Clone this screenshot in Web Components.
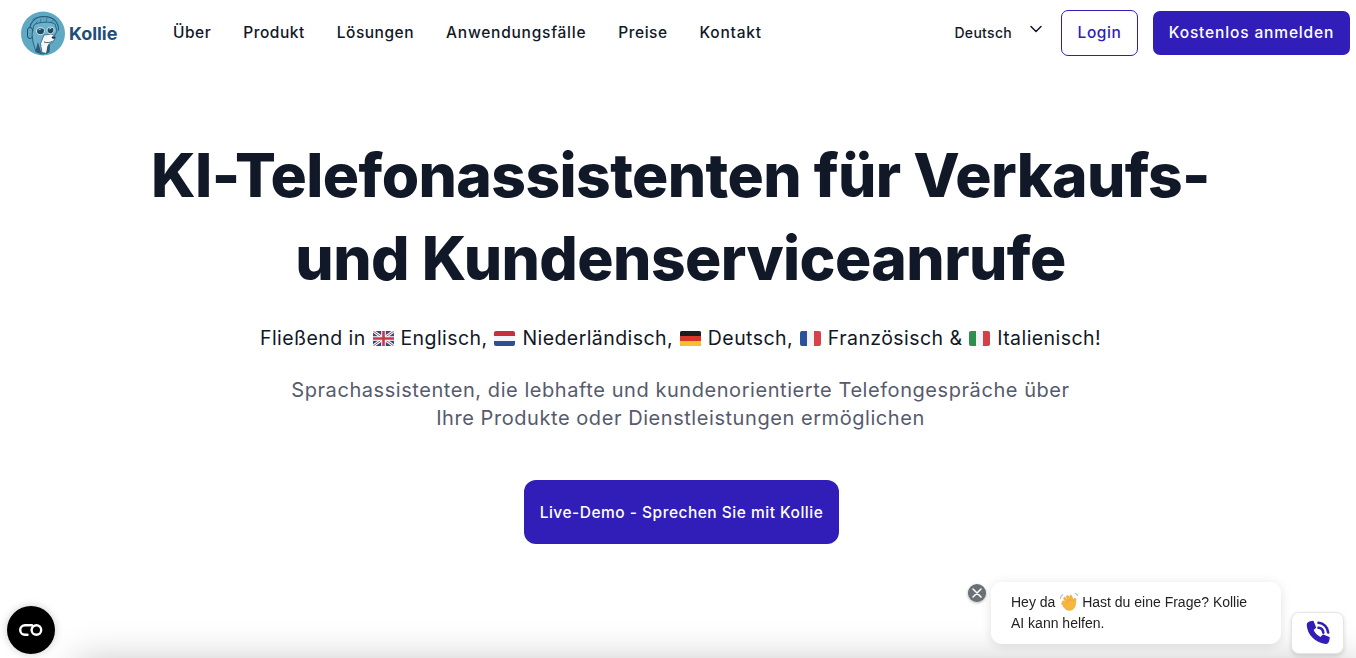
<!DOCTYPE html>
<html lang="de">
<head>
<meta charset="utf-8">
<title>Kollie</title>
<style>
  html, body { margin: 0; height: 100%; overflow: hidden; background: #fff; }
  body { font-family: Inter, "Liberation Sans", sans-serif; color: #111827; }
</style>
</head>
<body>
<kollie-nav></kollie-nav>
<kollie-hero>
  <span slot="title">KI-Telefonassistenten für Verkaufs-<br>und Kundenserviceanrufe</span>
  <span slot="lead">Fließend in <kollie-flag code="gb"></kollie-flag> Englisch, <kollie-flag code="nl"></kollie-flag> Niederländisch, <kollie-flag code="de"></kollie-flag> Deutsch, <kollie-flag code="fr"></kollie-flag> Französisch &amp; <kollie-flag code="it"></kollie-flag> Italienisch!</span>
  <span slot="text">Sprachassistenten, die lebhafte und kundenorientierte Telefongespräche über<br>Ihre Produkte oder Dienstleistungen ermöglichen</span>
  <span slot="cta">Live-Demo - Sprechen Sie mit Kollie</span>
</kollie-hero>
<kollie-next></kollie-next>
<kollie-a11y></kollie-a11y>
<kollie-chat></kollie-chat>

<script>
class KollieNav extends HTMLElement {
  constructor() {
    super();
    this.attachShadow({ mode: "open" });
  }
  connectedCallback() {
    this.shadowRoot.innerHTML = `
    <style>
      :host { display: block; font-family: Inter, sans-serif; }
      .bar { display: flex; align-items: center; height: 65px; padding: 0 6px 0 20px; }
      .brand { display: flex; align-items: center; gap: 2px; width: 153px; text-decoration: none; margin-top: 1px; }
      .brand span { font-size: 18px; font-weight: 700; color: #1f4e79; letter-spacing: -.05px; }
      ul { display: flex; gap: 32px; list-style: none; margin: 0; padding: 0 0 2px; flex: 1; }
      a { color: #111827; text-decoration: none; font-size: 15.5px; font-weight: 500; letter-spacing: .52px; }
      li.wide a { letter-spacing: .76px; }
      .lang { display: flex; align-items: center; gap: 18px; font-size: 14px; font-weight: 500; letter-spacing: .3px; color: #111827; margin-right: 19px; }
      .lang svg { width: 12px; height: 8px; margin-top: -8px; }
      .login, .signup { display: flex; align-items: center; justify-content: center; box-sizing: border-box; border-radius: 7px; font-size: 15.5px; font-weight: 500; }
      .login { width: 77px; height: 46px; border: 1px solid #311db8; color: #311db8; background: #fff; margin-right: 15px; letter-spacing: .6px; }
      .signup { width: 197px; height: 44px; background: #311db8; color: #fff; letter-spacing: .86px; }
    </style>
    <nav class="bar">
      <a class="brand" href="#"><kollie-logo></kollie-logo><span>Kollie</span></a>
      <ul>
        <li><a href="#">Über</a></li>
        <li><a href="#">Produkt</a></li>
        <li><a href="#">Lösungen</a></li>
        <li class="wide"><a href="#">Anwendungsfälle</a></li>
        <li><a href="#">Preise</a></li>
        <li class="wide"><a href="#">Kontakt</a></li>
      </ul>
      <div class="lang">Deutsch
        <svg viewBox="0 0 12 8" fill="none" stroke="#111827" stroke-width="1.5" stroke-linecap="round" stroke-linejoin="round"><path d="M1 1.5l5 5 5-5"/></svg>
      </div>
      <a class="login" href="#">Login</a>
      <a class="signup" href="#">Kostenlos anmelden</a>
    </nav>`;
  }
}

class KollieLogo extends HTMLElement {
  constructor() {
    super();
    this.attachShadow({ mode: "open" });
  }
  connectedCallback() {
    this.shadowRoot.innerHTML = `
    <style>:host { display: block; width: 47px; height: 47px; flex: none; } svg { display: block; }</style>
    <svg viewBox="0 0 47 47" width="47" height="47">
      <circle cx="23" cy="23.500" r="22" fill="#5fa9c5"/>
      <path d="M10 24C8 13 15 6.500 24 6.500s15 5.500 14.500 14" fill="none" stroke="#2a5d7c" stroke-width="1.100"/>
      <path d="M12.500 9.500C17 6 30 5.500 35 10" fill="none" stroke="#2a5d7c" stroke-width=".6"/>
      <rect x="7.500" y="17.500" width="5" height="11" rx="2.500" fill="#5fa9c5" stroke="#234f6c" stroke-width="1"/>
      <path d="M14 15c4-3 16-4 21-1l2 7-3 6-4 4-2 9-4 4-8-2-3-10-1-8z" fill="#6cb2cb" stroke="#234f6c" stroke-width=".8"/>
      <path d="M15 14l3-3M20 13l1-4M26 12l1-4M31 13l2-3" stroke="#234f6c" stroke-width=".5"/>
      <path d="M24 25l8-1 3.500 3-2.500 5-4.500 2.500-1.500 9-5-1-1.500-9z" fill="#f3f7f9" stroke="#234f6c" stroke-width=".7"/>
      <path d="M15.500 41l2.500-9 4 13zM26 44l1.500-8 2.500-1-.5 7z" fill="#2b5c7a"/>
      <path d="M20.500 36l3 2-1 2 2.500 1-.5-3 2-1.500-3 .5z" fill="#fff"/>
      <path d="M16.500 21c0-2.500 2-3.300 4-3.300s4 .8 4 3-1.500 4-4 4-4-1.700-4-3.700zM27 20c0-2 1.700-2.800 3.700-2.800s3.300.8 3.300 2.800-1.700 3.800-3.700 3.800-3.300-1.800-3.300-3.800z" fill="#1f4a66" stroke="#e6f2f6" stroke-width=".9"/>
      <path d="M18.500 20l2.500-1M29 19l2.300-.7" stroke="#9ccfe0" stroke-width="1"/>
      <ellipse cx="33.500" cy="27.500" rx="1.800" ry="1.200" fill="#17374f"/>
      <path d="M24 32c3 1 6 .8 8.500-.8" fill="none" stroke="#17374f" stroke-width=".8"/>
    </svg>`;
  }
}

const FLAGS = {
  gb: `<rect width="21" height="15" fill="#2b4a8c"/><path d="M0 0l21 15M21 0L0 15" stroke="#fff" stroke-width="3"/><path d="M0 0l21 15M21 0L0 15" stroke="#c8384a" stroke-width="1"/><path d="M10.500 0v15M0 7.500h21" stroke="#fff" stroke-width="4.600"/><path d="M10.500 0v15M0 7.500h21" stroke="#c8384a" stroke-width="2.600"/>`,
  nl: `<rect width="21" height="15" fill="#f6f6f8"/><rect width="21" height="5" fill="#c6303e"/><rect y="10" width="21" height="5" fill="#2f4f94"/>`,
  de: `<rect width="21" height="15" fill="#d9352a"/><rect width="21" height="5" fill="#1d1d1f"/><rect y="10" width="21" height="5" fill="#f5c02c"/>`,
  fr: `<rect width="21" height="15" fill="#f4f4f6"/><rect width="7" height="15" fill="#2c4f9e"/><rect x="14" width="7" height="15" fill="#d8404a"/>`,
  it: `<rect width="21" height="15" fill="#f4f4f6"/><rect width="7" height="15" fill="#2f8f4e"/><rect x="14" width="7" height="15" fill="#d3404a"/>`
};

class KollieFlag extends HTMLElement {
  constructor() {
    super();
    this.attachShadow({ mode: "open" });
  }
  connectedCallback() {
    const code = this.getAttribute("code");
    this.shadowRoot.innerHTML = `
    <style>
      :host { display: inline-block; width: 21px; height: 15px; margin: 0 1px 0 1px; vertical-align: -1px; }
      svg { display: block; border-radius: 2px; }
    </style>
    <svg viewBox="0 0 21 15" width="21" height="15">${FLAGS[code]}</svg>`;
  }
}

class KollieHero extends HTMLElement {
  constructor() {
    super();
    this.attachShadow({ mode: "open" });
  }
  connectedCallback() {
    this.shadowRoot.innerHTML = `
    <style>
      :host { display: block; font-family: Inter, sans-serif; }
      section { display: flex; flex-direction: column; align-items: center; text-align: center; padding-top: 69px; margin-left: 5px; }
      h1 { margin: 0; font-size: 60.5px; line-height: 83px; font-weight: 800; letter-spacing: -.6px; color: #111827; white-space: nowrap; }
      .lead { margin: 24px 0 0; font-size: 19.5px; line-height: 28px; letter-spacing: .43px; color: #111827; white-space: nowrap; }
      .text { margin: 24px 0 0; font-size: 20px; line-height: 28px; letter-spacing: .56px; color: #565a6e; white-space: nowrap; }
      .cta { display: flex; align-items: center; justify-content: center; width: 315px; height: 64px; margin: 48px 0 0 2px; border-radius: 12px; background: #311db8; color: #fff; font-size: 15.5px; font-weight: 500; letter-spacing: .5px; text-decoration: none; }
    </style>
    <section>
      <h1><slot name="title"></slot></h1>
      <p class="lead"><slot name="lead"></slot></p>
      <p class="text"><slot name="text"></slot></p>
      <a class="cta" href="#"><slot name="cta"></slot></a>
    </section>`;
  }
}

// naechste Sektion liegt unter dem Falz, nur ihr Schatten ist sichtbar
class KollieNext extends HTMLElement {
  constructor() {
    super();
    this.attachShadow({ mode: "open" });
  }
  connectedCallback() {
    this.shadowRoot.innerHTML = `
    <style>
      :host { position: fixed; left: 80px; right: 0; top: 664px; height: 200px; display: block; background: #fff; box-shadow: 0 0 36px 4px rgba(0,0,0,.22); }
    </style>`;
  }
}

class KollieA11y extends HTMLElement {
  constructor() {
    super();
    this.attachShadow({ mode: "open" });
  }
  connectedCallback() {
    this.shadowRoot.innerHTML = `
    <style>
      :host { position: fixed; left: 7px; top: 606px; width: 48px; height: 48px; border-radius: 50%; background: #000; display: flex; align-items: center; justify-content: center; box-shadow: 0 0 8px rgba(0,0,0,.2); }
    </style>
    <svg width="26" height="14" viewBox="0 0 26 14" fill="none" stroke="#fff" stroke-width="2.400" stroke-linecap="round">
      <path d="M14 2.200H7a4.800 4.800 0 0 0 0 9.600h2.500"/>
      <circle cx="18.400" cy="7" r="4.800"/>
    </svg>`;
  }
}

class KollieChat extends HTMLElement {
  constructor() {
    super();
    this.attachShadow({ mode: "open" });
  }
  connectedCallback() {
    this.shadowRoot.innerHTML = `
    <style>
      :host { position: fixed; left: 968px; top: 582px; width: 376px; height: 72px; display: block; font-family: "Liberation Sans", Arial, sans-serif; }
      .close { position: absolute; left: 0; top: 2px; width: 18px; height: 18px; border-radius: 50%; background: #6b7075; box-shadow: 0 1px 3px rgba(0,0,0,.3); display: flex; align-items: center; justify-content: center; }
      .bubble { position: absolute; left: 23px; top: 0; box-sizing: border-box; width: 290px; height: 62px; padding: 10px 20px; border-radius: 11px; background: #fff; box-shadow: 0 2px 12px rgba(0,0,0,.12); font-size: 14px; line-height: 21px; color: #222; white-space: nowrap; }
      .bubble svg { vertical-align: -1px; margin: -4px -1px -4px 0; }
      .call { position: absolute; right: 0; top: 30px; box-sizing: border-box; width: 53px; height: 42px; border-radius: 8px; border: 1px solid #e6e6e8; background: #fff; box-shadow: 0 2px 5px rgba(0,0,0,.14); display: flex; align-items: center; justify-content: center; }
    </style>
    <div class="close">
      <svg width="10" height="10" viewBox="0 0 10 10" stroke="#fff" stroke-width="1.500" stroke-linecap="round"><path d="M1 1l8 8M9 1L1 9"/></svg>
    </div>
    <div class="bubble">Hey da <svg width="20" height="20" viewBox="0 0 20 20"><path d="M3.500 10.500c-.8-1 .6-2.200 1.500-1.300L7.500 11.500 4.800 6.800c-.7-1.200 1-2.200 1.700-1.100l3 4.300-2-5.200c-.5-1.300 1.300-2 1.900-.8l2.400 4.800-1-4.300c-.3-1.300 1.500-1.700 2-.5l1.600 5 .5-2c.3-1.200 2.200-.8 2 .5-.3 2.500-.2 4.700-1 7-1.200 3.300-4.800 4.800-8 3.200-2.300-1.100-3.600-3.600-5.400-6.200z" fill="#f6b73c" stroke="#e39a26" stroke-width=".6"/><path d="M1.500 6.500c0-1.500.8-3 2.300-3.800M16 1.500c1 .2 2 1 2.500 2" fill="none" stroke="#aeb8c6" stroke-width="1.100" stroke-linecap="round"/></svg> Hast du eine Frage? Kollie<br>AI kann helfen.</div>
    <div class="call">
      <svg width="26" height="26" viewBox="0 0 26 26" fill="#311db8" stroke="#311db8" stroke-linejoin="round">
        <path stroke-width="1.400" d="M4.500 2.200 8 1.500l2.400 6-2.600 2.300c1.300 3.400 4.600 6.700 8 8l2.300-2.600 6 2.400-.7 3.500c-.3 1.300-1.400 2.200-2.600 2.100C11 22.600 2.800 14.400 2.400 4.800c0-1.200.8-2.300 2.100-2.600z"/>
        <path d="M13.500 2.800c5.200.3 9.400 4.500 9.700 9.700M13.500 7.800c2.600.3 4.500 2.200 4.800 4.800" fill="none" stroke-width="2.600" stroke-linecap="round"/>
      </svg>
    </div>`;
  }
}

customElements.define("kollie-logo", KollieLogo);
customElements.define("kollie-nav", KollieNav);
customElements.define("kollie-flag", KollieFlag);
customElements.define("kollie-hero", KollieHero);
customElements.define("kollie-next", KollieNext);
customElements.define("kollie-a11y", KollieA11y);
customElements.define("kollie-chat", KollieChat);
</script>
</body>
</html>
